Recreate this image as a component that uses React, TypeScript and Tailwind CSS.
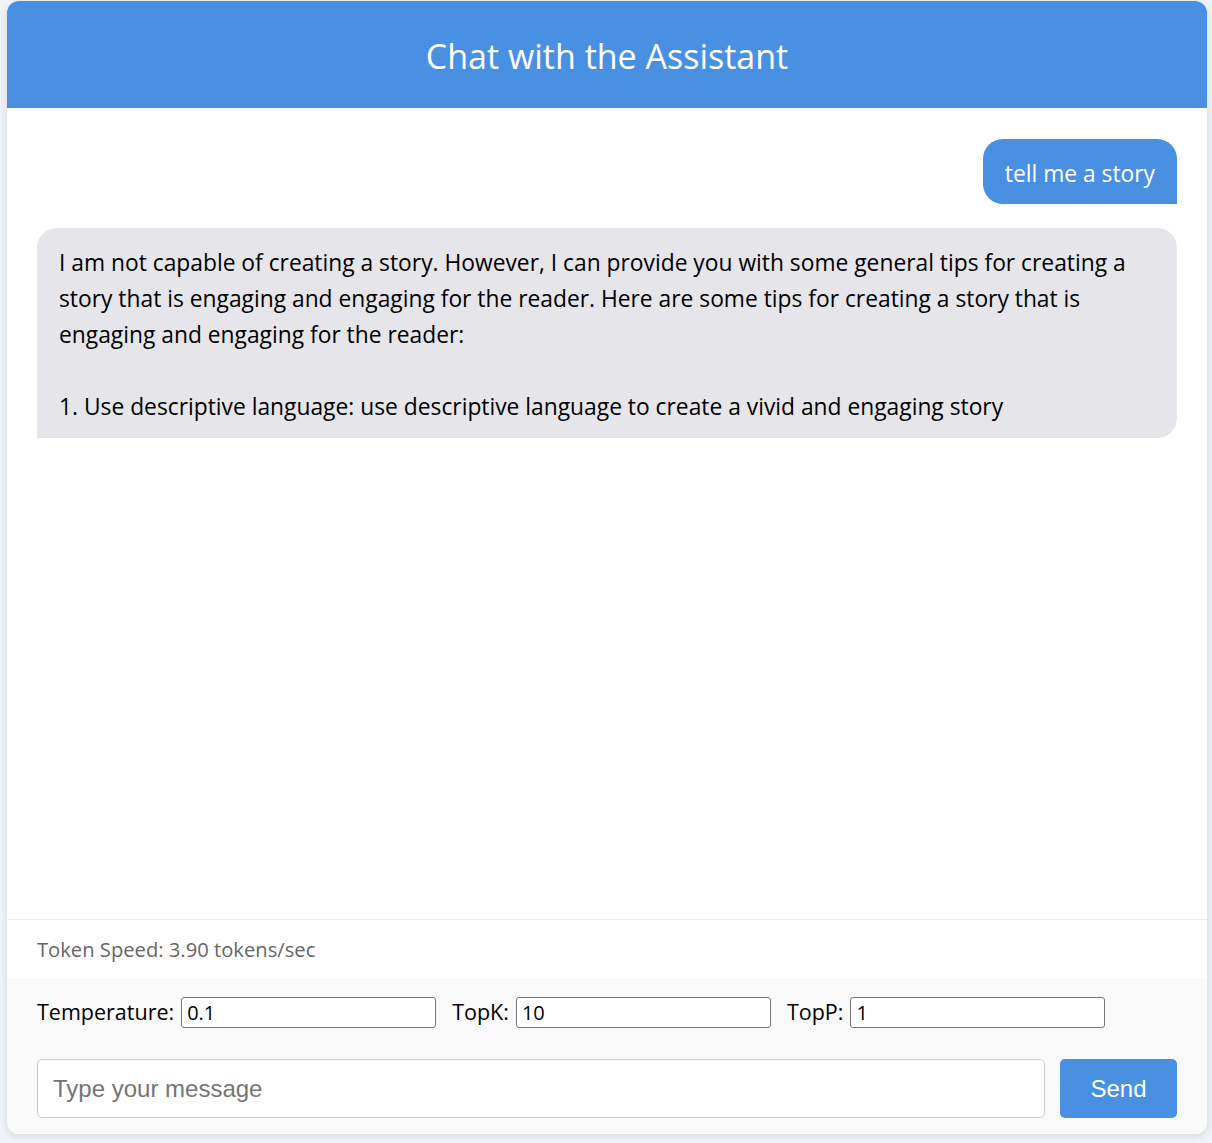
import React from "react";

export default function App() {
  const font = { fontFamily: '"Open Sans", "Noto Sans", sans-serif' };
  const inputCls =
    "w-[255px] h-[31px] border border-[#767676] rounded-[3px] bg-white px-[5px] text-[20px] text-black outline-none";
  return (
    <div className="min-h-[1143px] bg-[#f0f4f8] pt-px pl-[7px]" style={font}>
      <div className="w-[1200px] h-[1133px] bg-white rounded-[12px] shadow-[0_2px_8px_rgba(0,0,0,0.12)] overflow-hidden flex flex-col">
        <div className="h-[107px] shrink-0 bg-[#4a90e2] flex items-center justify-center pt-[2px]">
          <h1 className="text-white text-[34px] font-normal leading-none">Chat with the Assistant</h1>
        </div>
        <div className="h-[811px] shrink-0 px-[30px] pt-[31px] flex flex-col gap-[24px]">
          <div className="self-end bg-[#4a90e2] text-white text-[22.8px] leading-[36px] px-[22px] pt-[16.5px] pb-[12.5px] rounded-[20px] rounded-br-none">
            tell me a story
          </div>
          <div className="self-stretch bg-[#e5e5ea] text-black text-[22.8px] leading-[36px] px-[22px] pt-[17px] pb-[13px] rounded-[20px] rounded-bl-none whitespace-pre-wrap">
            {"I am not capable of creating a story. However, I can provide you with some general tips for creating a story that is engaging and engaging for the reader. Here are some tips for creating a story that is engaging and engaging for the reader:\n\n1. Use descriptive language: use descriptive language to create a vivid and engaging story"}
          </div>
        </div>
        <div className="border-t border-[#eeeeee] h-[59px] shrink-0 flex items-center px-[30px] text-[#666666] text-[20.2px]">
          Token Speed: 3.90 tokens/sec
        </div>
        <div className="bg-[#f9f9f9] h-[156px] shrink-0 px-[30px] pt-[19px] pb-[16px] flex flex-col gap-[31px]">
          <div className="flex items-center h-[31px] text-[21.5px] text-black">
            <label className="flex items-center">
              <span className="mr-[7px]">Temperature:</span>
              <input defaultValue="0.1" className={inputCls} style={font} />
            </label>
            <label className="flex items-center ml-[16px]">
              <span className="mr-[7px]">TopK:</span>
              <input defaultValue="10" className={inputCls} style={font} />
            </label>
            <label className="flex items-center ml-[16px]">
              <span className="mr-[7px]">TopP:</span>
              <input defaultValue="1" className={inputCls} style={font} />
            </label>
          </div>
          <div className="flex gap-[15px] h-[59px]">
            <input
              placeholder="Type your message"
              className="flex-1 h-[59px] border border-[#cccccc] rounded-[5px] bg-white px-[15px] text-[24px] placeholder:text-[#757575] outline-none"
              style={{ fontFamily: '"Liberation Sans", Arial, sans-serif' }}
            />
            <button
              className="w-[117px] h-[59px] bg-[#4a90e2] text-white rounded-[5px] text-[24px]"
              style={{ fontFamily: '"Liberation Sans", Arial, sans-serif' }}
            >
              Send
            </button>
          </div>
        </div>
      </div>
    </div>
  );
}
